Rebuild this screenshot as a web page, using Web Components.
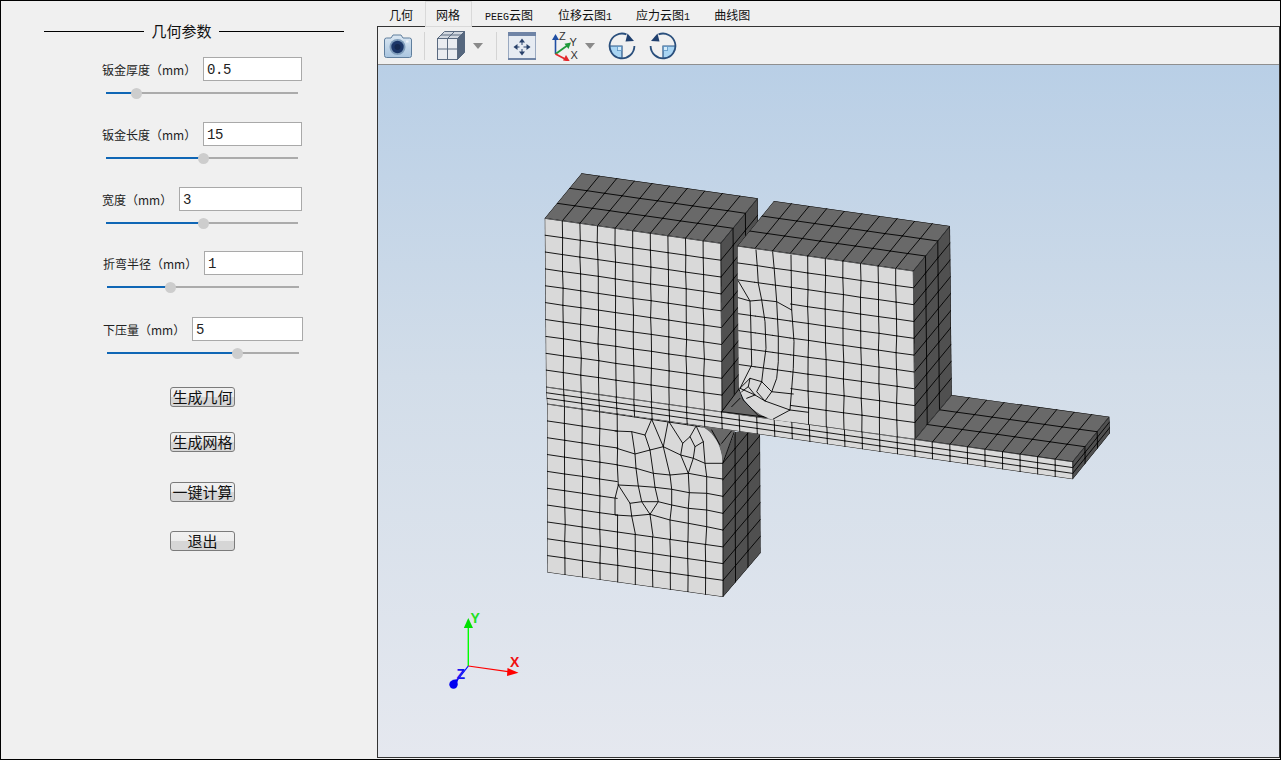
<!DOCTYPE html>
<html lang="zh">
<head>
<meta charset="utf-8">
<title>几何参数</title>
<style>
html,body{margin:0;padding:0;background:#f0f0f0;overflow:hidden}
</style>
</head>
<body>
<app-window>
  <side-panel slot="side">
    <panel-title>几何参数</panel-title>
    <param-row label="钣金厚度（mm）" value="0.5" thumb="30" input="99" style="margin-top:15px"></param-row>
    <param-row label="钣金长度（mm）" value="15" thumb="97" input="99" style="margin-top:23px"></param-row>
    <param-row label="宽度（mm）" value="3" thumb="97" input="123" style="margin-top:23px"></param-row>
    <param-row label="折弯半径（mm）" value="1" thumb="63" input="99" style="margin-top:22px;margin-left:102px"></param-row>
    <param-row label="下压量（mm）" value="5" thumb="130" input="111" style="margin-top:24px;margin-left:102px"></param-row>
    <push-button style="margin-top:28px">生成几何</push-button>
    <push-button style="margin-top:25px">生成网格</push-button>
    <push-button style="margin-top:30px">一键计算</push-button>
    <push-button style="margin-top:29px">退出</push-button>
  </side-panel>
  <tab-bar slot="tabs">
    <tab-item style="padding:0 12px 0 12px">几何</tab-item>
    <tab-item selected style="padding:0 11px 0 10px">网格</tab-item>
    <tab-item style="padding:0 12px 0 13px"><span-latin>PEEG</span-latin>云图</tab-item>
    <tab-item style="padding:0 12px 0 13px">位移云图<span-latin>1</span-latin></tab-item>
    <tab-item style="padding:0 12px 0 12px">应力云图<span-latin>1</span-latin></tab-item>
    <tab-item style="padding:0 12px 0 12px">曲线图</tab-item>
  </tab-bar>
  <tool-bar slot="tools"></tool-bar>
  <mesh-view slot="view"></mesh-view>
</app-window>

<script>
function shadow(el, html){ const r = el.attachShadow({mode:'open'}); r.innerHTML = html; return r; }
const CJK = '"Noto Sans CJK SC","Liberation Sans",sans-serif';

customElements.define('app-window', class extends HTMLElement{
  constructor(){ super(); shadow(this, `<style>
    :host{display:flex;box-sizing:border-box;width:1281px;height:760px;border:1px solid #000;background:#f0f0f0;font-family:${CJK};color:#1a1a1a}
    .side{width:376px;flex:none}
    .main{flex:1;display:flex;flex-direction:column;min-width:0;padding:0 0 1px 0}
    .pane{flex:1;display:flex;flex-direction:column;border:1px solid #333;min-height:0}
  </style>
  <div class="side"><slot name="side"></slot></div>
  <div class="main"><slot name="tabs"></slot>
    <div class="pane"><slot name="tools"></slot><slot name="view"></slot></div>
  </div>`); }
});

customElements.define('side-panel', class extends HTMLElement{
  constructor(){ super(); shadow(this, `<style>:host{display:block;padding-top:19px}</style><slot></slot>`); }
});

customElements.define('panel-title', class extends HTMLElement{
  constructor(){ super(); shadow(this, `<style>
    :host{display:flex;align-items:center;height:22px;margin-left:43px;width:300px;font-size:15px;line-height:22px;color:#111}
    i{display:block;height:1px;background:#000}
    .l{width:100px}.r{width:126px}
    span{padding:0 7px 0 8px;white-space:nowrap}
  </style><i class="l"></i><span><slot></slot></span><i class="r"></i>`); }
});

customElements.define('param-row', class extends HTMLElement{
  connectedCallback(){
    if(this.shadowRoot) return;
    const a = n => this.getAttribute(n);
    const t = +a('thumb');
    shadow(this, `<style>
      :host{display:block;margin-left:101px;width:200px}
      .top{display:flex;justify-content:space-between;align-items:center;height:24px}
      label{font-size:12px;line-height:26px;height:24px;color:#222;white-space:nowrap}
      .inp{box-sizing:border-box;height:24px;border:1px solid #a9a9a9;background:#fff;font:14px/25px "Liberation Mono",monospace;letter-spacing:-.4px;color:#222;padding-left:3px}
      .sl{display:flex;align-items:center;margin:6px 0 0 4px;width:192px;height:12px;position:relative}
      .a{height:2px;background:#0f66b5}
      .b{flex:1;height:2px;background:#ababab}
      .th{position:absolute;top:.5px;width:11px;height:11px;border-radius:50%;background:#cdcdcd}
    </style>
    <div class="top"><label>${a('label')}</label><div class="inp" style="width:${a('input')}px">${a('value')}</div></div>
    <div class="sl"><div class="a" style="width:${t}px"></div><div class="b"></div><div class="th" style="left:${t-5.5}px"></div></div>`);
  }
});

customElements.define('push-button', class extends HTMLElement{
  constructor(){ super(); shadow(this, `<style>
    :host{display:block;box-sizing:border-box;margin-left:169px;width:65px;height:20px;border:1px solid #7b7b7b;border-radius:3px;
      background:linear-gradient(#f1f1f1 0,#ececec 50%,#d6d6d6 50%,#d6d6d6 100%);
      font-size:15px;line-height:18px;text-align:center;color:#111;white-space:nowrap;overflow:hidden}
  </style><slot></slot>`); }
});

customElements.define('tab-bar', class extends HTMLElement{
  constructor(){ super(); shadow(this, `<style>
    :host{display:flex;height:25px;flex:none;align-items:flex-end;font-size:12px}
  </style><slot></slot>`); }
});
customElements.define('tab-item', class extends HTMLElement{
  constructor(){ super(); shadow(this, `<style>
    :host{display:block;height:24px;line-height:26px;white-space:nowrap;color:#111;box-sizing:content-box}
    :host([selected]){border:1px solid #d9d9d9;height:24px;margin-bottom:-1px;position:relative;z-index:1;background:#f0f0f0;line-height:25px}
  </style><slot></slot>`); }
});
customElements.define('span-latin', class extends HTMLElement{
  constructor(){ super(); shadow(this, `<style>:host{display:inline;font:10px "Liberation Mono",monospace}</style><slot></slot>`); }
});

customElements.define('tool-bar', class extends HTMLElement{
  constructor(){ super();
    const arrow = `<svg class="ar" width="10" height="6" viewBox="0 0 10 6"><path d="M0 0H10L5 6Z" fill="#8a8a8a"/></svg>`;
    const rot = (m)=>`<svg width="28" height="28" viewBox="0 0 28 28"><g ${m?'transform="translate(28 0) scale(-1 1)"':''}>
      <path d="M14 14V26.4A12.4 12.4 0 0 1 1.6 14Z" fill="#a9d5f3"/>
      <path d="M1.6 14H14V26.4" fill="none" stroke="#2a5688" stroke-width="1.2"/>
      <rect x="9.5" y="14.6" width="4" height="4" fill="#d6ecfa" stroke="#5b93c2" stroke-width=".8"/>
      <path d="M26.4 14A12.4 12.4 0 1 1 18.5 2.4" fill="none" stroke="#2a4f7c" stroke-width="1.8"/>
      <path d="M19.5 1.5L26 9L17.5 9.5Z" fill="#1f3f6e"/></g></svg>`;
    shadow(this, `<style>
      :host{display:flex;align-items:center;flex:none;height:37px;box-sizing:content-box;border-bottom:1px solid #8f8f8f;padding-left:6px;background:#f0f0f0}
      svg{display:block;flex:none}
      .sep{width:1px;height:28px;background:#d4d4d4;flex:none}
      .ar{margin-left:8px}
    </style>
    <svg width="28" height="26" viewBox="0 0 28 26">
      <defs><linearGradient id="cam" x1="0" y1="0" x2="0" y2="1"><stop offset="0" stop-color="#dce8f3"/><stop offset="1" stop-color="#a9c5df"/></linearGradient></defs>
      <path d="M2.5 5H7L9 2H17L19 5H25.5Q27.5 5 27.5 7V22.5Q27.5 24.5 25.5 24.5H2.5Q.5 24.5 .5 22.5V7Q.5 5 2.5 5Z" fill="url(#cam)" stroke="#5f7e9d"/>
      <circle cx="13.5" cy="14" r="8" fill="#7f9dbb"/><circle cx="13.5" cy="14" r="6.2" fill="#1c3768"/><circle cx="13.5" cy="14" r="3" fill="#14294f"/>
      <rect x="22" y="7.5" width="2.5" height="2" fill="#eef4fa"/>
    </svg>
    <div class="sep" style="margin-left:12px"></div>
    <svg width="28" height="29" viewBox="0 0 28 29" style="margin-left:12px">
      <path d="M.5 7.5L7.5 .5H27.5L20.5 7.5Z" fill="#d2d8e0" stroke="#5a6a80"/>
      <path d="M20.5 7.5L27.5 .5V21.5L20.5 28.5Z" fill="#56677e" stroke="#56677e"/>
      <rect x=".5" y="7.5" width="20" height="21" fill="#e9ecf1" stroke="#5a6a80"/>
      <path d="M10.5 7.5V28.5M.5 18H20.5M10.5 7.5L17.5 .5M4 4H24" fill="none" stroke="#5a6a80"/>
    </svg>
    ${arrow}
    <div class="sep" style="margin-left:13px"></div>
    <svg width="28" height="28" viewBox="0 0 28 28" style="margin-left:11px">
      <rect x=".5" y=".5" width="27" height="27" fill="#e6ebf2" stroke="#9aa9c0"/>
      <rect x="0" y="0" width="28" height="4" fill="#6f84a6"/><rect x="0" y="26" width="28" height="2" fill="#6f84a6"/>
      <path d="M14 9V21M7.5 15H20.5" stroke="#2b4470" stroke-width="1" fill="none" stroke-dasharray="4 4"/>
      <g fill="#27406a"><path d="M14 6.5L17 10.5H11Z"/><path d="M14 23.5L17 19.5H11Z"/><path d="M5.5 15L9.5 12V18Z"/><path d="M22.5 15L18.5 12V18Z"/></g>
    </svg>
    <svg width="26" height="30" viewBox="0 0 26 30" style="margin-left:16px">
      <path d="M3.5 23V6" stroke="#1f4ea3" stroke-width="1.6" fill="none"/><path d="M3.5 3L7 9H0Z" fill="#1f4ea3"/>
      <path d="M3.5 23L16 14" stroke="#1f9a3a" stroke-width="1.8" fill="none"/><path d="M19 11.5L16.5 18L12.5 12.7Z" fill="#1f9a3a"/>
      <path d="M3.5 23L15 29" stroke="#e3282c" stroke-width="1.8" fill="none"/><path d="M18 30.5L11 29.5L14 24Z" fill="#e3282c"/>
      <text x="7" y="9" font-family="Liberation Sans" font-size="11" fill="#333">Z</text>
      <text x="17.5" y="15" font-family="Liberation Sans" font-size="11" fill="#333">Y</text>
      <text x="18.5" y="28" font-family="Liberation Sans" font-size="11" fill="#333">X</text>
    </svg>
    ${arrow.replace('class="ar"','class="ar" style="margin-left:7px"')}
    <div style="margin-left:13px">${rot(false)}</div>
    <div style="margin-left:13px">${rot(true)}</div>`);
  }
});

customElements.define('mesh-view', class extends HTMLElement{
  constructor(){ super();
    const TOP='#696969', SIDE='#505050', FRONT='#d9d9d9';
    let clipN=0, defs='', out='';
    const hash=(a,b,c)=>{const s=Math.sin(a*127.1+b*311.7+c*74.7)*43758.5453;return (s-Math.floor(s))*2-1;};
    const f=n=>n.toFixed(1);
    function grid(P00,P10,P01,P11,nu,nv,o={}){
      const seed=o.seed||1, jit=o.jit||0, sv=o.skipV||(()=>false), sh=o.skipH||(()=>false);
      const pt=(i,j)=>{
        const u=i/nu,v=j/nv;
        let x=(1-u)*(1-v)*P00[0]+u*(1-v)*P10[0]+(1-u)*v*P01[0]+u*v*P11[0];
        let y=(1-u)*(1-v)*P00[1]+u*(1-v)*P10[1]+(1-u)*v*P01[1]+u*v*P11[1];
        if(i>0&&i<nu&&j>0&&j<nv){x+=hash(i,j,seed)*jit;y+=hash(j,i,seed+3)*jit*.3;}
        return [x,y];
      };
      let d='';
      for(let j=0;j<=nv;j++)for(let i=0;i<nu;i++){ if(sh(i,j))continue; const a=pt(i,j),b=pt(i+1,j); d+=`M${f(a[0])} ${f(a[1])}L${f(b[0])} ${f(b[1])}`; }
      for(let i=0;i<=nu;i++)for(let j=0;j<nv;j++){ if(sv(i,j))continue; const a=pt(i,j),b=pt(i,j+1); d+=`M${f(a[0])} ${f(a[1])}L${f(b[0])} ${f(b[1])}`; }
      const shape=o.shape||`M${P00}L${P10}L${P11}L${P01}Z`;
      const id='c'+(++clipN);
      defs+=`<clipPath id="${id}"><path d="${shape}"/></clipPath>`;
      out+=`<path d="${shape}" fill="${o.fill}"/><path d="${d}" clip-path="url(#${id})" class="ln"/>`;
    }
    const poly=(z,lists)=>{ let d=''; for(const l of lists){ d+='M'+l.map(p=>{const q=z(p[0],p[1]);return f(q[0])+' '+f(q[1]);}).join('L'); } out+=`<path d="${d}" class="ln"/>`; };
    const z5=(x,y)=>[730+x/3,195+y/3], z6=(x,y)=>[530+x/3,380+y/3];

    // lower block: side, rounded top, front
    grid([722.5,430],[760,385],[723,597],[760.5,553],3,10,{fill:SIDE,shape:'M722.3 463L735 432L760 430L760.5 553L723 597Z'});
    out+=`<path d="M695.7 425C712 428 722 445 722.3 463L735 431L720 427Z" fill="#686868"/>`;
    poly(z6,[[[545,150],[570,195]],[[575,190],[605,152]],[[578,250],[612,158]]]);
    grid([547,404],[722.5,430],[547.5,572.5],[723,597],10,10,{fill:FRONT,jit:.3,seed:9,
      shape:'M547 404L695.7 425C712 428 722 445 722.3 463L723 597L547.5 572.5Z',
      skipV:(i,j)=>(i>=5&&i<=9&&j<=6)||(i==4&&j>=3&&j<=5),
      skipH:(i,j)=>(i>=4&&j>=1&&j<=6)});
    poly(z6,[
      [[255,153],[305,155],[345,165],[360,210],[315,222],[260,205]],
      [[262,255],[318,265]],
      [[305,155],[315,222],[318,265],[325,318],[335,365],[360,403]],
      [[265,315],[325,318],[375,322],[425,328],[478,338],[530,340],[578,349]],
      [[262,255],[265,315],[255,355],[255,405],[305,408],[300,370],[265,315]],
      [[305,408],[360,403],[420,420],[475,430],[530,440],[578,450]],
      [[300,370],[335,365],[385,365],[425,375],[475,385],[530,390],[578,400]],
      [[305,408],[316,461]],
      [[365,118],[345,165]],[[365,118],[400,200],[415,122],[458,190],[452,225],[475,280],[490,235],[495,200],[480,170],[458,190]],
      [[360,210],[400,200],[452,225],[490,235],[525,250],[577,250]],
      [[360,210],[370,280],[375,322],[385,365],[360,403],[369,468]],
      [[400,200],[420,285],[425,328],[425,375],[420,420],[421.6,476]],
      [[318,265],[370,280],[420,285],[475,280],[530,290],[578,297]],
      [[475,280],[478,338],[475,385],[475,430],[474,484]],
      [[497,135],[520,185],[525,250],[530,290],[530,340],[530,390],[530,440],[527,492]],
      [[480,170],[497,140]],[[495,200],[520,185]]
    ]);

    // left upper block
    grid([581.7,173.3],[757.7,198.3],[544.7,218.3],[720.7,243.3],10,3,{fill:TOP,jit:.2,seed:2});
    grid([720.7,243.3],[757.7,198.3],[722,412],[759,367],3,10,{fill:SIDE,seed:3});
    grid([544.7,218.3],[720.7,243.3],[546,387],[722,412],10,10,{fill:FRONT,jit:.4,seed:4});

    // sheet strip
    grid([546,387],[1072.7,461.7],[547,404],[1072.7,479.3],30,3,{fill:FRONT,seed:5});

    // dark web under the right block's fillet
    out+=`<path d="M722 412L735.7 393L739 390Q745 408 770 419L722 412Z" fill="#686868"/>`;
    poly((x,y)=>[715+x/3,365+y/3],[[[20,140],[62,85],[72,72]],[[72,72],[85,105],[130,152],[165,158]],[[20,140],[165,158]],[[50,125],[75,100]]]);

    // right upper block
    grid([774,201],[950,226],[737.3,246],[913.3,271],10,3,{fill:TOP,jit:.2,seed:6});
    grid([913.3,271],[950,226],[915,439.3],[951.7,395],3,10,{fill:SIDE,seed:7});
    grid([737.3,246],[913.3,271],[737.5,415],[915,439.3],10,10,{fill:FRONT,jit:.4,seed:8,
      shape:'M737.3 246L913.3 271L915 439.3L772 419.5Q748 412 739 388Z',
      skipV:(i,j)=>i>=1&&i<=3,
      skipH:(i,j)=>(i<=2&&j>=8)||(i<=2&&j==3)});
    poly(z5,[
      [[78,165],[82,215],[85,265],[95,315],[105,380],[108,460],[100,520],[95,560]],
      [[128,172],[133,225],[140,320],[145,420],[145,500],[140,550],[125,590]],
      [[183,180],[185,345],[192,440],[190,520],[180,645]],
      [[25,258],[60,318],[62,375],[65,510],[30,580]],
      [[25,308],[60,318],[95,315],[140,320],[185,345]],
      [[30,580],[60,550],[95,560],[125,590],[190,597]],
      [[125,590],[105,618],[75,600],[30,580]],
      [[60,550],[55,575],[75,600]],[[95,560],[80,590],[105,618]],
      [[105,618],[180,645],[130,672]],[[180,645],[235,652]],
      [[50,610],[75,600]],[[35,590],[55,575]]
    ]);

    // plate
    grid([951.7,395],[1109.3,416.7],[915,439.3],[1072.7,461.7],9,3,{fill:TOP,jit:.2,seed:11});
    grid([1072.7,461.7],[1109.3,416.7],[1072.7,479.3],[1110,433],3,3,{fill:SIDE,seed:12});

    const svg=`<svg xmlns="http://www.w3.org/2000/svg" viewBox="378 65 901 692" width="901" height="692">
      <defs>${defs}</defs>
      <style>.ln{fill:none;stroke:#000;stroke-width:.9;stroke-linejoin:round;stroke-linecap:round}
      text{font:bold 14px "Liberation Sans",sans-serif}</style>
      ${out}
      <path d="M468.3 666V627" stroke="#0f0" stroke-width="1.4" fill="none"/>
      <path d="M468.3 618L473 628H463.8Z" fill="#00e000"/>
      <path d="M468.3 666L508 671.7" stroke="#f00" stroke-width="1.2" fill="none"/>
      <path d="M518.5 672.8L507.5 668L507 676Z" fill="#f00"/>
      <path d="M468.3 666L456 682" stroke="#00f" stroke-width="1.2" fill="none"/>
      <circle cx="453.5" cy="684.5" r="4.2" fill="#0000f0"/><path d="M452 680L458 679L457 685Z" fill="#0000f0"/>
      <text x="470.5" y="623" fill="#22e022">Y</text>
      <text x="510" y="667" fill="#f01010">X</text>
      <text x="456.5" y="679" fill="#1515f0">Z</text>
    </svg>`;
    shadow(this, `<style>
      :host{display:block;flex:1;min-height:0;background:linear-gradient(#b9cfe6 0%,#d2dde9 45%,#e5e8ef 100%);overflow:hidden}
      svg{display:block}
    </style>${svg}`);
  }
});
</script>
</body>
</html>
